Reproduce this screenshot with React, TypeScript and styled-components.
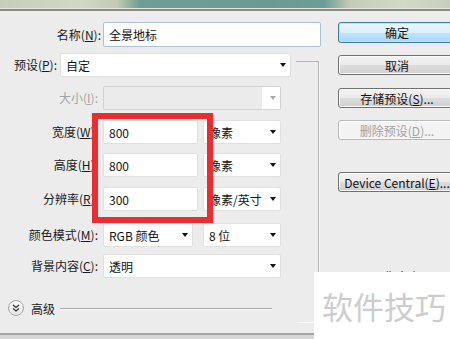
import React from 'react';
import styled, { createGlobalStyle } from 'styled-components';

const GlobalStyle = createGlobalStyle`
  html, body {
    margin: 0;
    padding: 0;
    background: #d6d6d6;
  }
  body {
    font-family: "Noto Sans CJK SC", "Noto Sans", sans-serif;
    font-size: 12px;
    color: #111;
  }
`;

const Window = styled.div`
  position: relative;
  width: 450px;
  height: 339px;
  overflow: hidden;
  background: #d6d6d6;
`;

const Banner = styled.div`
  height: 8px;
  background: linear-gradient(
    90deg,
    #c7cdb8 0%,
    #d3d8c4 18%,
    #c3cbb4 26%,
    #6f9e95 31%,
    #6a9b93 60%,
    #6d9d95 72%,
    #c4cdb7 78%,
    #d4d9c6 90%,
    #c9cdbd 100%
  );
  border-bottom: 1px solid #e3e6da;
`;

const Rule = styled.div`
  height: 2px;
  background: #8a8c85;
`;

const Dialog = styled.div`
  position: relative;
  display: flex;
  height: 324px;
  background: #ececec;
  border-bottom: 2px solid #a4a4a4;
  box-sizing: border-box;
  padding-top: 11px;
`;

const FormCol = styled.div`
  position: relative;
  width: 338px;
  flex-shrink: 0;
`;

const GroupFrame = styled.div`
  position: absolute;
  left: 296px;
  top: 39px;
  width: 22px;
  height: 260px;
  border-top: 1px solid #b4b4b4;
  border-right: 1px solid #b4b4b4;
  box-shadow: 1px 1px 0 #fafafa;
`;

const Row = styled.div<{ $mt?: number; $h?: number }>`
  position: relative;
  display: flex;
  align-items: center;
  margin-top: ${(p) => p.$mt ?? 0}px;
  height: ${(p) => p.$h ?? 24}px;
`;

const Label = styled.div<{ $w: number; $gap: number; $disabled?: boolean }>`
  width: ${(p) => p.$w}px;
  margin-right: ${(p) => p.$gap}px;
  flex-shrink: 0;
  text-align: right;
  white-space: nowrap;
  color: ${(p) => (p.$disabled ? '#a3a3a3' : '#1a1a1a')};
  font-size: 12px;
  line-height: 16px;
`;

const Field = styled.div<{ $w: number; $focus?: boolean; $disabled?: boolean; $ml?: number }>`
  position: relative;
  width: ${(p) => p.$w}px;
  height: 100%;
  margin-left: ${(p) => p.$ml ?? 0}px;
  box-sizing: border-box;
  display: flex;
  align-items: center;
  padding-left: 5px;
  background: ${(p) => (p.$disabled ? '#ebebeb' : '#ffffff')};
  border: 1px solid ${(p) => (p.$focus ? '#a6c2dc' : p.$disabled ? '#d2d2d2' : '#e0e0e0')};
  border-radius: 2px;
  font-size: 12px;
  color: #111;
  white-space: nowrap;
  overflow: hidden;
`;

const Arrow = styled.span<{ $disabled?: boolean }>`
  position: absolute;
  right: 4px;
  top: 50%;
  margin-top: -2px;
  width: 0;
  height: 0;
  border-left: 3px solid transparent;
  border-right: 3px solid transparent;
  border-top: 4px solid ${(p) => (p.$disabled ? '#a8a8a8' : '#111')};
`;

const ArrowBox = styled.span<{ $disabled?: boolean }>`
  position: absolute;
  right: 0;
  top: 0;
  bottom: 0;
  width: 18px;
  background: ${(p) => (p.$disabled ? '#ffffff' : 'transparent')};
`;

const Highlight = styled.div`
  position: absolute;
  left: 92px;
  top: 91px;
  width: 121px;
  height: 110px;
  box-sizing: border-box;
  border: 6px solid #ec2c30;
`;

const AdvancedRow = styled.div`
  display: flex;
  align-items: center;
  margin-top: 22px;
  height: 16px;
  padding-left: 8px;
`;

const Toggle = styled.span`
  display: flex;
  align-items: center;
  justify-content: center;
  width: 14px;
  height: 14px;
  border-radius: 50%;
  border: 1px solid #a6a6a6;
  background: linear-gradient(#ffffff, #e4e4e4);
`;

const AdvancedText = styled.span`
  margin-left: 7px;
  font-size: 12px;
  color: #1a1a1a;
`;

const Line = styled.span`
  margin-left: 5px;
  width: 212px;
  height: 1px;
  background: #a9a9a9;
  box-shadow: 0 1px 0 #fafafa;
`;

const ButtonCol = styled.div`
  display: flex;
  flex-direction: column;
  width: 118px;
  flex-shrink: 0;
`;

const Button = styled.div<{ $mt?: number; $h?: number; $primary?: boolean; $disabled?: boolean }>`
  margin-top: ${(p) => p.$mt ?? 0}px;
  height: ${(p) => p.$h ?? 20}px;
  box-sizing: border-box;
  display: flex;
  align-items: center;
  justify-content: center;
  border-radius: 3px;
  font-size: 12px;
  white-space: nowrap;
  border: 1px solid ${(p) => (p.$primary ? '#3d7bad' : p.$disabled ? '#b5b9bc' : '#717171')};
  background: ${(p) =>
    p.$primary
      ? 'linear-gradient(#eaf6fd 0%, #d9f0fc 50%, #bee6fd 51%, #a7d9f5 100%)'
      : p.$disabled
      ? '#f3f3f3'
      : 'linear-gradient(#f2f2f2 0%, #ebebeb 50%, #dddddd 51%, #cfcfcf 100%)'};
  box-shadow: ${(p) => (p.$primary ? 'inset 0 0 0 1px #c4e3f5' : 'inset 0 0 0 1px #fbfbfb')};
  color: ${(p) => (p.$disabled ? '#a2a2a2' : '#111')};
`;

const Info = styled.div`
  margin-top: 77px;
  padding-left: 34px;
  font-size: 12px;
  line-height: 16px;
  color: #1a1a1a;
`;

const Watermark = styled.div`
  position: absolute;
  left: 314px;
  top: 272px;
  width: 136px;
  height: 67px;
  background: #ffffff;
  display: flex;
  align-items: center;
  padding-left: 8px;
  box-sizing: border-box;
  font-size: 31px;
  color: #cdcdcd;
  white-space: nowrap;
`;

const DoubleChevron = () => (
  <svg width="8" height="8" viewBox="0 0 8 8">
    <path d="M1 1 L4 3.5 L7 1 M1 4.5 L4 7 L7 4.5" fill="none" stroke="#333" strokeWidth="1.3" />
  </svg>
);

const App = () => {
  return (
    <Window>
      <GlobalStyle />
      <Banner />
      <Rule />
      <Dialog>
        <FormCol>
          <GroupFrame />
          <Row $h={25}>
            <Label $w={101} $gap={2}>
              名称(<u>N</u>):
            </Label>
            <Field $w={218} $focus>全景地标</Field>
          </Row>
          <Row $mt={6}>
            <Label $w={57} $gap={3}>
              预设(<u>P</u>):
            </Label>
            <Field $w={231}>
              自定
              <Arrow />
            </Field>
          </Row>
          <Row $mt={9}>
            <Label $w={98} $gap={5} $disabled>
              大小(<u>I</u>):
            </Label>
            <Field $w={178} $disabled>
              <ArrowBox $disabled />
              <Arrow $disabled />
            </Field>
          </Row>
          <Row $mt={10}>
            <Label $w={98} $gap={5}>
              宽度(<u>W</u>):
            </Label>
            <Field $w={95}>800</Field>
            <Field $w={78} $ml={5}>
              像素
              <Arrow />
            </Field>
          </Row>
          <Row $mt={9}>
            <Label $w={98} $gap={5}>
              高度(<u>H</u>):
            </Label>
            <Field $w={95}>800</Field>
            <Field $w={78} $ml={5}>
              像素
              <Arrow />
            </Field>
          </Row>
          <Row $mt={10}>
            <Label $w={98} $gap={5}>
              分辨率(<u>R</u>):
            </Label>
            <Field $w={95}>300</Field>
            <Field $w={78} $ml={5}>
              像素/英寸
              <Arrow />
            </Field>
          </Row>
          <Row $mt={12}>
            <Label $w={98} $gap={5}>
              颜色模式(<u>M</u>):
            </Label>
            <Field $w={90}>
              RGB 颜色
              <Arrow />
            </Field>
            <Field $w={78} $ml={10}>
              8 位
              <Arrow />
            </Field>
          </Row>
          <Row $mt={7}>
            <Label $w={98} $gap={5}>
              背景内容(<u>C</u>):
            </Label>
            <Field $w={178}>
              透明
              <Arrow />
            </Field>
          </Row>
          <AdvancedRow>
            <Toggle>
              <DoubleChevron />
            </Toggle>
            <AdvancedText>高级</AdvancedText>
            <Line />
          </AdvancedRow>
          <Highlight />
        </FormCol>
        <ButtonCol>
          <Button $h={21} $primary>
            确定
          </Button>
          <Button $mt={12}>取消</Button>
          <Button $mt={13}>
            存储预设(<u>S</u>)...
          </Button>
          <Button $mt={12} $disabled>
            删除预设(<u>D</u>)...
          </Button>
          <Button $mt={32}>
            Device Central(<u>E</u>)...
          </Button>
          <Info>图像大小:</Info>
        </ButtonCol>
      </Dialog>
      <Watermark>软件技巧</Watermark>
    </Window>
  );
};

export default App;
